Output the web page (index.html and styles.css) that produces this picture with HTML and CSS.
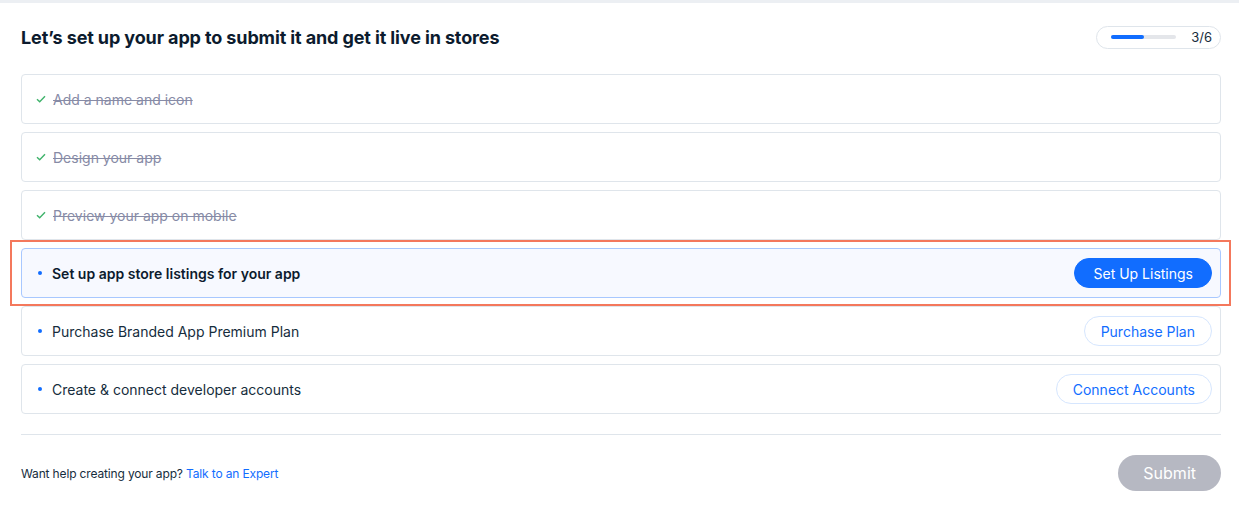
FILE: index.html
```html
<!DOCTYPE html>
<html lang="en">
<head>
    <meta charset="UTF-8">
    <meta name="viewport" content="width=device-width, initial-scale=1.0">
    <title>Set up your app</title>
    <link rel="stylesheet" href="styles.css">
</head>
<body>
    <div class="topband"></div>
    <main class="page">
        <header class="head">
            <h1>Let’s set up your app to submit it and get it live in stores</h1>
            <div class="progress">
                <div class="track"><div class="fill" style="width: 50%"></div></div>
                <span class="count">3/6</span>
            </div>
        </header>

        <ul class="steps">
            <li class="step done">
                <svg class="check" width="10" height="8" viewBox="0 0 10 8"><path d="M1 4.2 L3.7 6.8 L9 1.2" fill="none" stroke="#3fb36b" stroke-width="1.4"/></svg>
                <span class="label">Add a name and icon</span>
            </li>
            <li class="step done">
                <svg class="check" width="10" height="8" viewBox="0 0 10 8"><path d="M1 4.2 L3.7 6.8 L9 1.2" fill="none" stroke="#3fb36b" stroke-width="1.4"/></svg>
                <span class="label">Design your app</span>
            </li>
            <li class="step done">
                <svg class="check" width="10" height="8" viewBox="0 0 10 8"><path d="M1 4.2 L3.7 6.8 L9 1.2" fill="none" stroke="#3fb36b" stroke-width="1.4"/></svg>
                <span class="label">Preview your app on mobile</span>
            </li>
            <li class="step current">
                <span class="dot"></span>
                <span class="label">Set up app store listings for your app</span>
                <button class="btn primary">Set Up Listings</button>
            </li>
            <li class="step">
                <span class="dot"></span>
                <span class="label">Purchase Branded App Premium Plan</span>
                <button class="btn outline">Purchase Plan</button>
            </li>
            <li class="step">
                <span class="dot"></span>
                <span class="label">Create &amp; connect developer accounts</span>
                <button class="btn outline">Connect Accounts</button>
            </li>
        </ul>

        <footer class="foot">
            <p>Want help creating your app? <a href="#">Talk to an Expert</a></p>
            <button class="btn submit" disabled>Submit</button>
        </footer>
    </main>
</body>
</html>
```

FILE: styles.css
```css
body {
    margin: 0;
    font-family: Inter, "Noto Sans", sans-serif;
    color: #162d3d;
    background-color: #fff;
}
.topband {
    height: 3px;
    background-color: #eceff3;
}
.page {
    padding: 0 18px 0 21px;
}
.head {
    display: flex;
    align-items: center;
    justify-content: space-between;
    height: 68px;
    padding-bottom: 3px;
}
h1 {
    margin: 0;
    font-size: 18px;
    font-weight: 700;
    letter-spacing: -0.12px;
    color: #0c1b2e;
}
.progress {
    display: flex;
    align-items: center;
    gap: 15px;
    width: 125px;
    height: 23px;
    box-sizing: border-box;
    padding: 0 8px 0 14px;
    border: 1px solid #dfe5eb;
    border-radius: 12px;
}
.track {
    width: 67px;
    height: 4px;
    border-radius: 2px;
    background-color: #e4e6ea;
}
.fill {
    height: 100%;
    border-radius: 2px;
    background-color: #116dff;
}
.count {
    font-size: 13px;
    color: #162d3d;
}
.steps {
    list-style: none;
    margin: 0;
    padding: 0;
    display: flex;
    flex-direction: column;
    gap: 8px;
}
.step {
    display: flex;
    align-items: center;
    height: 50px;
    box-sizing: border-box;
    padding: 0 8px 0 14px;
    border: 1px solid #dfe5eb;
    border-radius: 4px;
    font-size: 14px;
    position: relative;
}
.check {
    width: 10px;
    margin: 0 7px 0 0;
}
.dot {
    width: 4px;
    height: 4px;
    border-radius: 50%;
    background-color: #116dff;
    margin: 0 10px 0 2px;
}
.label {
    flex: 1;
}
.done .label {
    color: #878ba6;
    text-decoration: line-through;
}
.current {
    background-color: #f7f9ff;
    border-color: #a8c8ff;
}
.current .label {
    font-weight: 600;
    color: #0c1b2e;
}
.current::after {
    content: "";
    position: absolute;
    top: -9px;
    bottom: -9px;
    left: -12px;
    right: -11px;
    border: 2px solid #f4785c;
}
.btn {
    font-family: Inter, "Noto Sans", sans-serif;
    font-size: 14px;
    height: 30px;
    padding: 0 16px;
    border-radius: 15px;
    cursor: pointer;
}
.primary {
    background-color: #116dff;
    border: 1px solid #116dff;
    color: #fff;
    padding: 0 18px;
}
.outline {
    background-color: #fff;
    border: 1px solid #d6e6fe;
    color: #116dff;
}
.foot {
    display: flex;
    align-items: center;
    justify-content: space-between;
    margin-top: 20px;
    border-top: 1px solid #dfe5eb;
    padding-top: 20px;
}
.foot p {
    margin: 0;
    font-size: 12px;
    letter-spacing: -0.15px;
    color: #162d3d;
}
.foot a {
    color: #116dff;
    text-decoration: none;
}
.submit {
    height: 36px;
    padding: 0 25px;
    border: none;
    border-radius: 18px;
    background-color: #b6b8c2;
    color: #fff;
    font-size: 16px;
}
```
